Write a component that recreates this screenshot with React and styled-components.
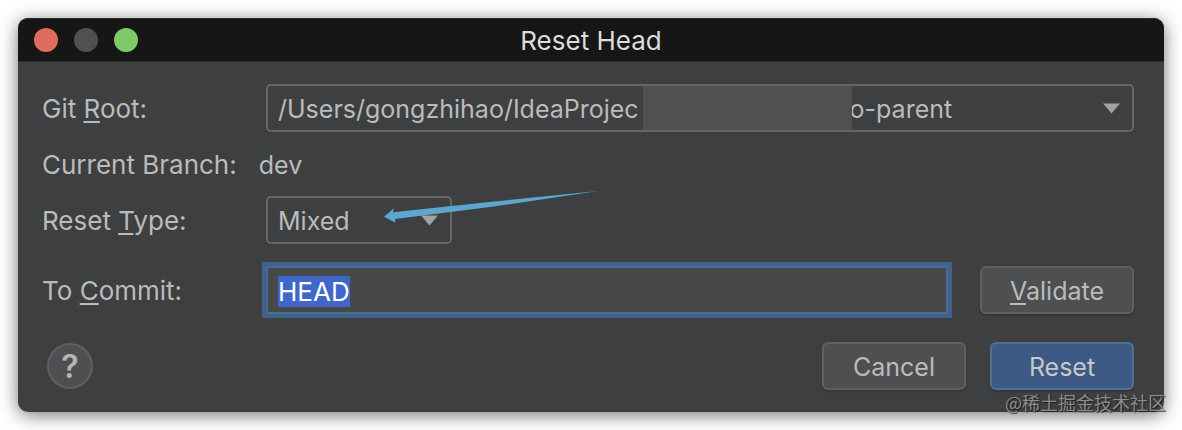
import { useEffect, useRef } from "react";
import styled, { createGlobalStyle } from "styled-components";

const GlobalStyle = createGlobalStyle`
  *,
  *::before,
  *::after {
    box-sizing: border-box;
  }

  body {
    margin: 0;
    background-color: #ffffff;
    color: #bbbbbb;
    font-family: Inter, "Liberation Sans", sans-serif;
    font-size: 25px;
    line-height: 32px;
  }
`;

const Page = styled.main`
  position: relative;
  padding: 18px;
`;

const Dialog = styled.section`
  border-radius: 10px;
  background-color: #3d3f41;
  box-shadow: 0 3px 18px rgba(0, 0, 0, 0.55);
`;

const TitleBar = styled.header`
  display: grid;
  grid-template-columns: 1fr auto 1fr;
  align-items: center;
  height: 44px;
  padding: 0 16px;
  border-top: 1px solid #2b2b2b;
  border-bottom: 1px solid #2b2c2d;
  border-radius: 10px 10px 0 0;
  background-color: #161616;
`;

const WindowButtons = styled.div`
  display: flex;
  gap: 16px;
`;

const WindowButton = styled.button`
  width: 24px;
  height: 24px;
  padding: 0;
  border: none;
  border-radius: 50%;
  background-color: ${({ $color }) => $color};
`;

const Title = styled.h1`
  margin: 0;
  padding-top: 2px;
  color: #dcdcdc;
  font-size: 26px;
  font-weight: 400;
`;

const Form = styled.form`
  padding: 22px 30px 22px 24px;
`;

const Row = styled.div`
  display: flex;
  align-items: center;
  height: ${({ $tall }) => ($tall ? "64px" : "48px")};
  margin-bottom: ${({ $gap = 0 }) => $gap}px;
`;

const Label = styled.label`
  flex: none;
  width: 224px;
  padding-top: 2px;
  font-size: 26px;
`;

const BranchLabel = styled.span`
  margin-right: 22px;
  padding-top: 2px;
  font-size: 26px;
`;

const Branch = styled.span`
  padding-top: 2px;
`;

const Mnemonic = styled.span`
  text-decoration: underline;
  text-decoration-thickness: 2px;
  text-decoration-skip-ink: none;
  text-underline-offset: 3px;
`;

const SelectBox = styled.div`
  position: relative;
  flex: ${({ $wide }) => ($wide ? "1" : "none")};
  width: ${({ $wide }) => ($wide ? "auto" : "186px")};
`;

const Select = styled.select`
  display: block;
  appearance: none;
  width: 100%;
  height: 48px;
  padding: 2px 40px 0 10px;
  border: 2px solid #646668;
  border-radius: 5px;
  outline: none;
  background-color: transparent;
  color: inherit;
  font: inherit;
`;

const Caret = styled.svg`
  position: absolute;
  top: 19px;
  right: 13px;
  width: 19px;
  height: 11px;
  pointer-events: none;
`;

const Redaction = styled.span`
  position: absolute;
  top: 2px;
  bottom: 2px;
  left: 377px;
  width: 209px;
  background-color: #4f5052;
`;

const Arrow = styled.svg`
  position: absolute;
  top: -6px;
  left: 118px;
  width: 216px;
  height: 34px;
  pointer-events: none;
`;

const CommitInput = styled.input`
  flex: 1;
  min-width: 0;
  height: 48px;
  margin-right: 32px;
  padding: 2px 10px 0;
  border: 2px solid #466d94;
  border-radius: 0;
  outline: none;
  background-color: #464849;
  box-shadow: 0 0 0 4px #3f618a;
  color: #bbbbbb;
  font: inherit;
  font-size: 26px;

  &::selection {
    background-color: #3f66c9;
    color: #ffffff;
  }
`;

const Button = styled.button`
  width: ${({ $wide }) => ($wide ? "154px" : "144px")};
  height: 48px;
  padding: 2px 0 0;
  border: 2px solid ${({ $primary }) => ($primary ? "#4f7193" : "#5e6062")};
  border-radius: 6px;
  background-color: ${({ $primary }) => ($primary ? "#3c5a85" : "#4d4f51")};
  box-shadow: 0 2px 2px rgba(0, 0, 0, 0.15);
  color: ${({ $primary }) => ($primary ? "#c8c8c8" : "#bbbbbb")};
  font: inherit;
`;

const Footer = styled.footer`
  display: flex;
  align-items: center;
  gap: 24px;
`;

const HelpButton = styled.button`
  width: 46px;
  height: 46px;
  margin: 0 auto 0 5px;
  padding: 2px 0 0;
  border: 2px solid #5e6062;
  border-radius: 50%;
  background-color: #4d4f51;
  color: #b4b4b4;
  font: inherit;
  font-size: 32px;
  font-weight: 600;
`;

const Watermark = styled.span`
  position: absolute;
  right: 16px;
  bottom: 15px;
  color: #8c8c8c;
  font-family: "Noto Sans CJK SC", sans-serif;
  font-size: 18px;
  line-height: 26px;
  text-shadow: 1px 1px 1px rgba(0, 0, 0, 0.6);
`;

function DownCaret() {
  return (
    <Caret viewBox="0 0 19 11" aria-hidden="true">
      <path d="M1 0.5h17L9.500 10.500z" fill="#a0a1a2" />
    </Caret>
  );
}

// The middle of the path is covered, so only its two ends are spelled out
const rootPath = `/Users/gongzhihao/IdeaProjec${"\u00a0".repeat(30)}o-parent`;

export default function App() {
  const commitRef = useRef(null);

  useEffect(() => {
    commitRef.current.focus();
    commitRef.current.select();
  }, []);

  return (
    <>
      <GlobalStyle />
      <Page>
        <Dialog role="dialog" aria-labelledby="title">
          <TitleBar>
            <WindowButtons>
              <WindowButton $color="#e06c60" aria-label="Close" />
              <WindowButton $color="#505050" aria-label="Minimize" disabled />
              <WindowButton $color="#7fc968" aria-label="Zoom" />
            </WindowButtons>
            <Title id="title">Reset Head</Title>
          </TitleBar>
          <Form onSubmit={(event) => event.preventDefault()}>
            <Row>
              <Label htmlFor="root-path">
                Git <Mnemonic>R</Mnemonic>oot:
              </Label>
              <SelectBox $wide>
                <Select id="root-path">
                  <option>{rootPath}</option>
                </Select>
                <Redaction />
                <DownCaret />
              </SelectBox>
            </Row>
            <Row $tall>
              <BranchLabel>Current Branch:</BranchLabel>
              <Branch>dev</Branch>
            </Row>
            <Row $gap={22}>
              <Label htmlFor="reset-type">
                Reset <Mnemonic>T</Mnemonic>ype:
              </Label>
              <SelectBox>
                <Select id="reset-type" defaultValue="Mixed">
                  <option>Soft</option>
                  <option>Mixed</option>
                  <option>Hard</option>
                  <option>Keep</option>
                </Select>
                <DownCaret />
                <Arrow viewBox="0 0 216 34" aria-hidden="true">
                  <path
                    d="M0 26.700L10 18.300L9 22.300L110 11.500L214 1L110 16.500L11 29L11.300 32.700z"
                    fill="#5ea6cf"
                  />
                </Arrow>
              </SelectBox>
            </Row>
            <Row $gap={28}>
              <Label htmlFor="commit">
                To <Mnemonic>C</Mnemonic>ommit:
              </Label>
              <CommitInput id="commit" ref={commitRef} defaultValue="HEAD" />
              <Button type="button" $wide>
                <Mnemonic>V</Mnemonic>alidate
              </Button>
            </Row>
            <Footer>
              <HelpButton type="button" aria-label="Help">
                ?
              </HelpButton>
              <Button type="button">Cancel</Button>
              <Button type="submit" $primary>
                Reset
              </Button>
            </Footer>
          </Form>
        </Dialog>
        <Watermark>@稀土掘金技术社区</Watermark>
      </Page>
    </>
  );
}
